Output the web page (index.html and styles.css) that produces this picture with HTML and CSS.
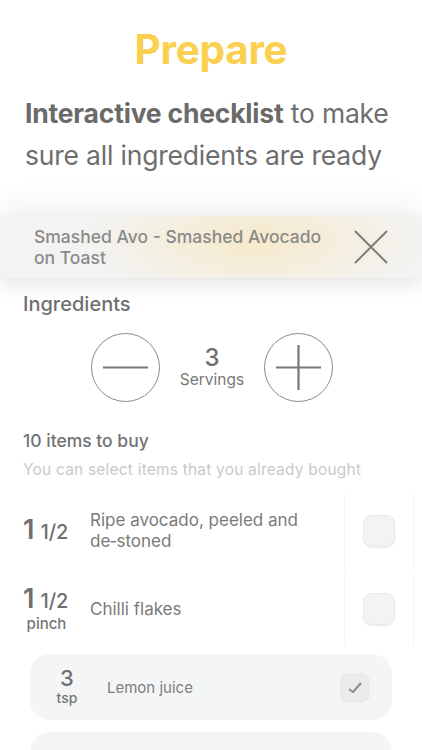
FILE: index.html
```html
<!DOCTYPE html>
<html lang="en">
<head>
    <meta charset="UTF-8">
    <meta name="viewport" content="width=device-width, initial-scale=1.0">
    <title>Prepare</title>
    <link rel="stylesheet" href="styles.css">
</head>
<body>
    <div class="page">
        <h1 class="title">Prepare</h1>
        <p class="intro"><b>Interactive checklist</b> to make sure all ingredients are ready</p>

        <div class="recipe-bar">
            <div class="recipe-name">Smashed Avo - Smashed Avocado on Toast</div>
            <svg class="close" width="34" height="34" viewBox="0 0 34 34">
                <path d="M1 1 L33 33 M33 1 L1 33" stroke="#7d7d7d" stroke-width="2" fill="none"/>
            </svg>
        </div>

        <div class="section-title">Ingredients</div>

        <div class="servings">
            <button class="round-btn">
                <svg width="69" height="69" viewBox="0 0 69 69">
                    <circle cx="34.5" cy="34.5" r="34" stroke="#8a8a8a" stroke-width="1" fill="none"/>
                    <path d="M12 34.5 H57" stroke="#777" stroke-width="2.2"/>
                </svg>
            </button>
            <div class="servings-count">
                <span class="num">3</span>
                <span class="lbl">Servings</span>
            </div>
            <button class="round-btn">
                <svg width="69" height="69" viewBox="0 0 69 69">
                    <circle cx="34.5" cy="34.5" r="34" stroke="#8a8a8a" stroke-width="1" fill="none"/>
                    <path d="M12 34.5 H57 M34.5 12 V57" stroke="#777" stroke-width="2.2"/>
                </svg>
            </button>
        </div>

        <div class="buy-title">10 items to buy</div>
        <div class="buy-hint">You can select items that you already bought</div>

        <div class="items">
            <div class="item">
                <div class="qty"><span class="whole">1</span> <span class="frac">1/2</span></div>
                <div class="name">Ripe avocado, peeled and de&#8209;stoned</div>
                <div class="check-col"><span class="box"></span></div>
            </div>
            <div class="item">
                <div class="qty"><span class="whole">1</span> <span class="frac">1/2</span><span class="unit">pinch</span></div>
                <div class="name">Chilli flakes</div>
                <div class="check-col"><span class="box"></span></div>
            </div>
            <div class="item-card">
                <div class="qty"><span class="whole">3</span><span class="unit">tsp</span></div>
                <div class="name">Lemon juice</div>
                <span class="box small">
                    <svg width="15" height="13" viewBox="0 0 15 13">
                        <path d="M1 8 L5 11 L13 2" stroke="#8d8d8d" stroke-width="2" fill="none" stroke-linejoin="round"/>
                    </svg>
                </span>
            </div>
            <div class="item-card"></div>
        </div>
    </div>
</body>
</html>
```

FILE: styles.css
```css
body {
    margin: 0;
    background: #fff;
    font-family: Inter, Roboto, "Liberation Sans", sans-serif;
    color: #727272;
}
.page {
    width: 422px;
    height: 750px;
    overflow: hidden;
}
.title {
    margin: 26px 0 0;
    text-align: center;
    font-size: 40.5px;
    line-height: 48px;
    font-weight: 700;
    letter-spacing: -0.3px;
    color: #fbcf4f;
}
.intro {
    margin: 18px 25px 0;
    font-size: 26.5px;
    line-height: 42px;
    letter-spacing: -0.2px;
    color: #6e6e6e;
}
.intro b {
    font-weight: 700;
    color: #6a6a6a;
}
.recipe-bar {
    margin-top: 40px;
    height: 62px;
    display: flex;
    align-items: center;
    justify-content: space-between;
    padding: 0 34px 0 34px;
    background: radial-gradient(ellipse 170px 60px at 255px 40%, rgba(248, 226, 170, 0.55), rgba(248, 226, 170, 0) 100%), #f3f3f2;
    box-shadow: 0 -8px 34px rgba(0, 0, 0, 0.07), 0 8px 18px rgba(0, 0, 0, 0.08);
}
.recipe-name {
    width: 295px;
    font-size: 17.5px;
    line-height: 21px;
    font-weight: 500;
    color: #8a8a8a;
}
.close {
    flex: none;
}
.section-title {
    margin: 14px 23px 0;
    font-size: 20px;
    line-height: 24px;
    font-weight: 500;
    color: #6f6f6f;
}
.servings {
    margin-top: 17px;
    display: flex;
    align-items: center;
    justify-content: center;
    gap: 22px;
    padding-left: 2px;
}
.round-btn {
    border: 0;
    padding: 0;
    background: none;
    width: 69px;
    height: 69px;
}
.round-btn svg {
    display: block;
}
.servings-count {
    display: flex;
    flex-direction: column;
    align-items: center;
    width: 60px;
}
.servings-count .num {
    font-size: 24px;
    line-height: 24px;
    font-weight: 500;
    color: #707070;
}
.servings-count .lbl {
    font-size: 15.5px;
    line-height: 20px;
    color: #777;
}
.buy-title {
    margin: 28px 23px 0;
    font-size: 17.5px;
    line-height: 22px;
    font-weight: 500;
    color: #737373;
}
.buy-hint {
    margin: 8px 23px 0;
    font-size: 15.5px;
    line-height: 20px;
    letter-spacing: 0.2px;
    color: #c9c9c9;
}
.items {
    margin-top: 12px;
}
.item {
    display: flex;
    align-items: center;
    height: 78px;
    padding-left: 23px;
}
.qty {
    width: 67px;
    flex: none;
    display: flex;
    flex-wrap: wrap;
    align-items: baseline;
    color: #6f6f6f;
}
.qty .whole {
    font-size: 27px;
    line-height: 28px;
    font-weight: 600;
    margin-right: 6px;
}
.qty .frac {
    font-size: 20px;
    line-height: 28px;
    font-weight: 500;
}
.qty .unit {
    width: 47px;
    text-align: center;
    font-size: 15px;
    line-height: 18px;
    font-weight: 500;
    color: #777;
}
.item .name {
    flex: 1;
    font-size: 17px;
    line-height: 21px;
    color: #7a7a7a;
    padding-right: 14px;
}
.check-col {
    width: 68px;
    height: 74px;
    flex: none;
    display: flex;
    align-items: center;
    justify-content: center;
    border-left: 1px solid #f5f5f5;
    border-right: 1px solid #f5f5f5;
    margin-right: 8px;
}
.box {
    width: 32px;
    height: 32px;
    border-radius: 9px;
    background: #f4f2f2;
    border: 1px solid #ebe9e9;
    box-shadow: 0 1px 2px rgba(0, 0, 0, 0.08);
    box-sizing: border-box;
    display: flex;
    align-items: center;
    justify-content: center;
}
.item-card {
    margin: 6px 30px 12px;
    height: 66px;
    border-radius: 20px;
    background: #f3f5f6;
    display: flex;
    align-items: center;
    padding: 0 23px 0 13px;
}
.item-card .qty {
    width: 60px;
    flex-direction: column;
    align-items: center;
    flex-wrap: nowrap;
    margin-left: -6px;
}
.item-card .qty .whole {
    font-size: 22px;
    line-height: 22px;
    font-weight: 500;
    margin: 0;
}
.item-card .qty .unit {
    font-size: 14px;
    line-height: 18px;
    width: auto;
}
.item-card .name {
    flex: 1;
    font-size: 15px;
    color: #7d7d7d;
    padding-left: 10px;
}
.box.small {
    width: 28px;
    height: 28px;
    border-radius: 7px;
    background: #eceaea;
}
```
